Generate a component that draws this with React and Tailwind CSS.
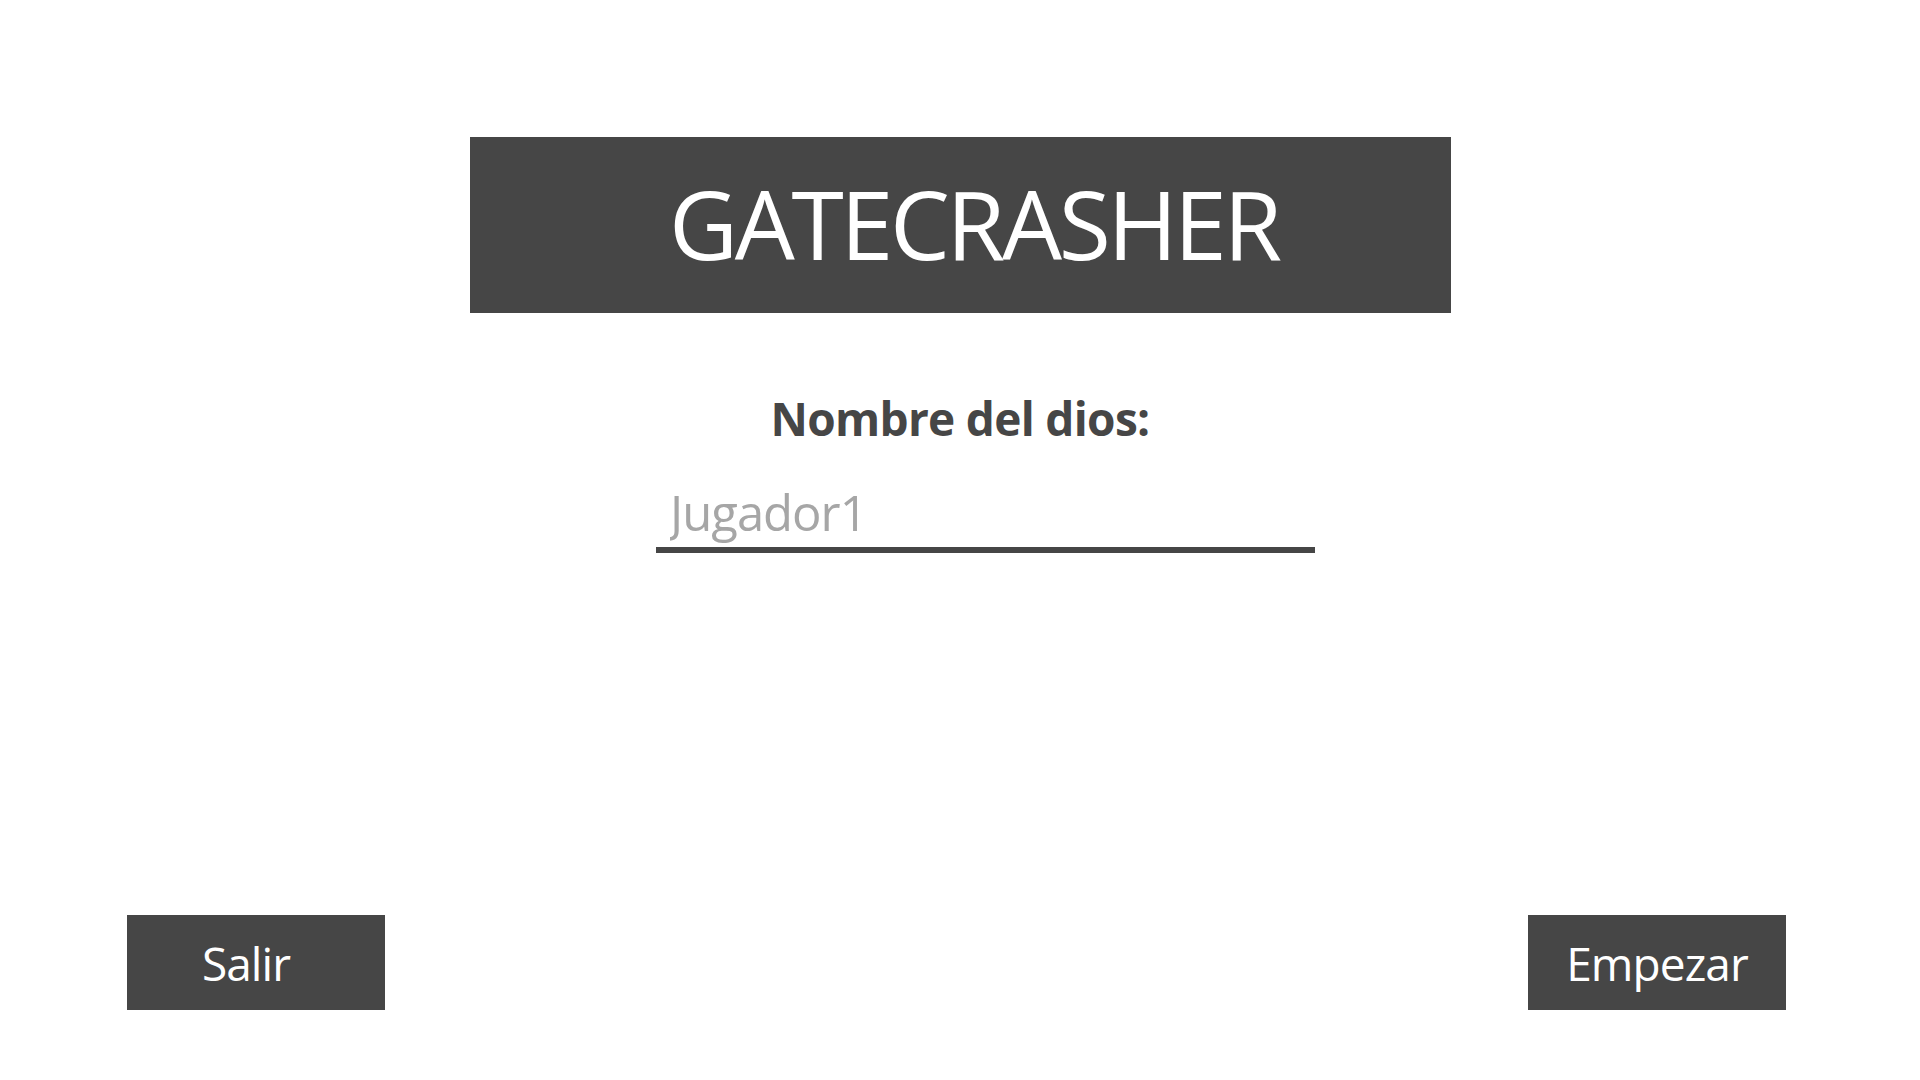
const font = { fontFamily: '"Open Sans", "Noto Sans", sans-serif' };

export default function App() {
    return (
        <div className="w-full h-screen bg-white flex flex-col items-center" style={font}>
            {/* Title */}
            <div className="mt-[137px] w-[981px] h-[176px] bg-[#464646] flex items-center justify-center">
                <h1 className="text-[95px] leading-none text-white tracking-[-0.035em] pb-[4px] pl-[28px]">GATECRASHER</h1>
            </div>

            {/* Name field */}
            <label htmlFor="god-name" className="mt-[82px] text-[46px] leading-none font-bold text-[#464646] tracking-[-0.015em]">
                Nombre del dios:
            </label>
            <input
                id="god-name"
                type="text"
                placeholder="Jugador1"
                className="mt-[42px] ml-[51px] w-[659px] h-[70px] pl-[14px] pb-[4px] text-[49px] text-[#464646] placeholder:text-[#a6a6a6] tracking-[-0.02em] border-b-[6px] border-[#464646] outline-none bg-transparent"
            />

            <div className="flex-1" />

            {/* Bottom buttons */}
            <div className="w-full flex justify-between pl-[127px] pr-[134px] mb-[70px]">
                <button className="w-[258px] h-[95px] bg-[#464646] text-white text-[46px] leading-none tracking-[-0.02em] flex items-center justify-center pr-[20px]">
                    Salir
                </button>
                <button className="w-[258px] h-[95px] bg-[#464646] text-white text-[46px] leading-none tracking-[-0.02em] flex items-center justify-center">
                    Empezar
                </button>
            </div>
        </div>
    );
}
